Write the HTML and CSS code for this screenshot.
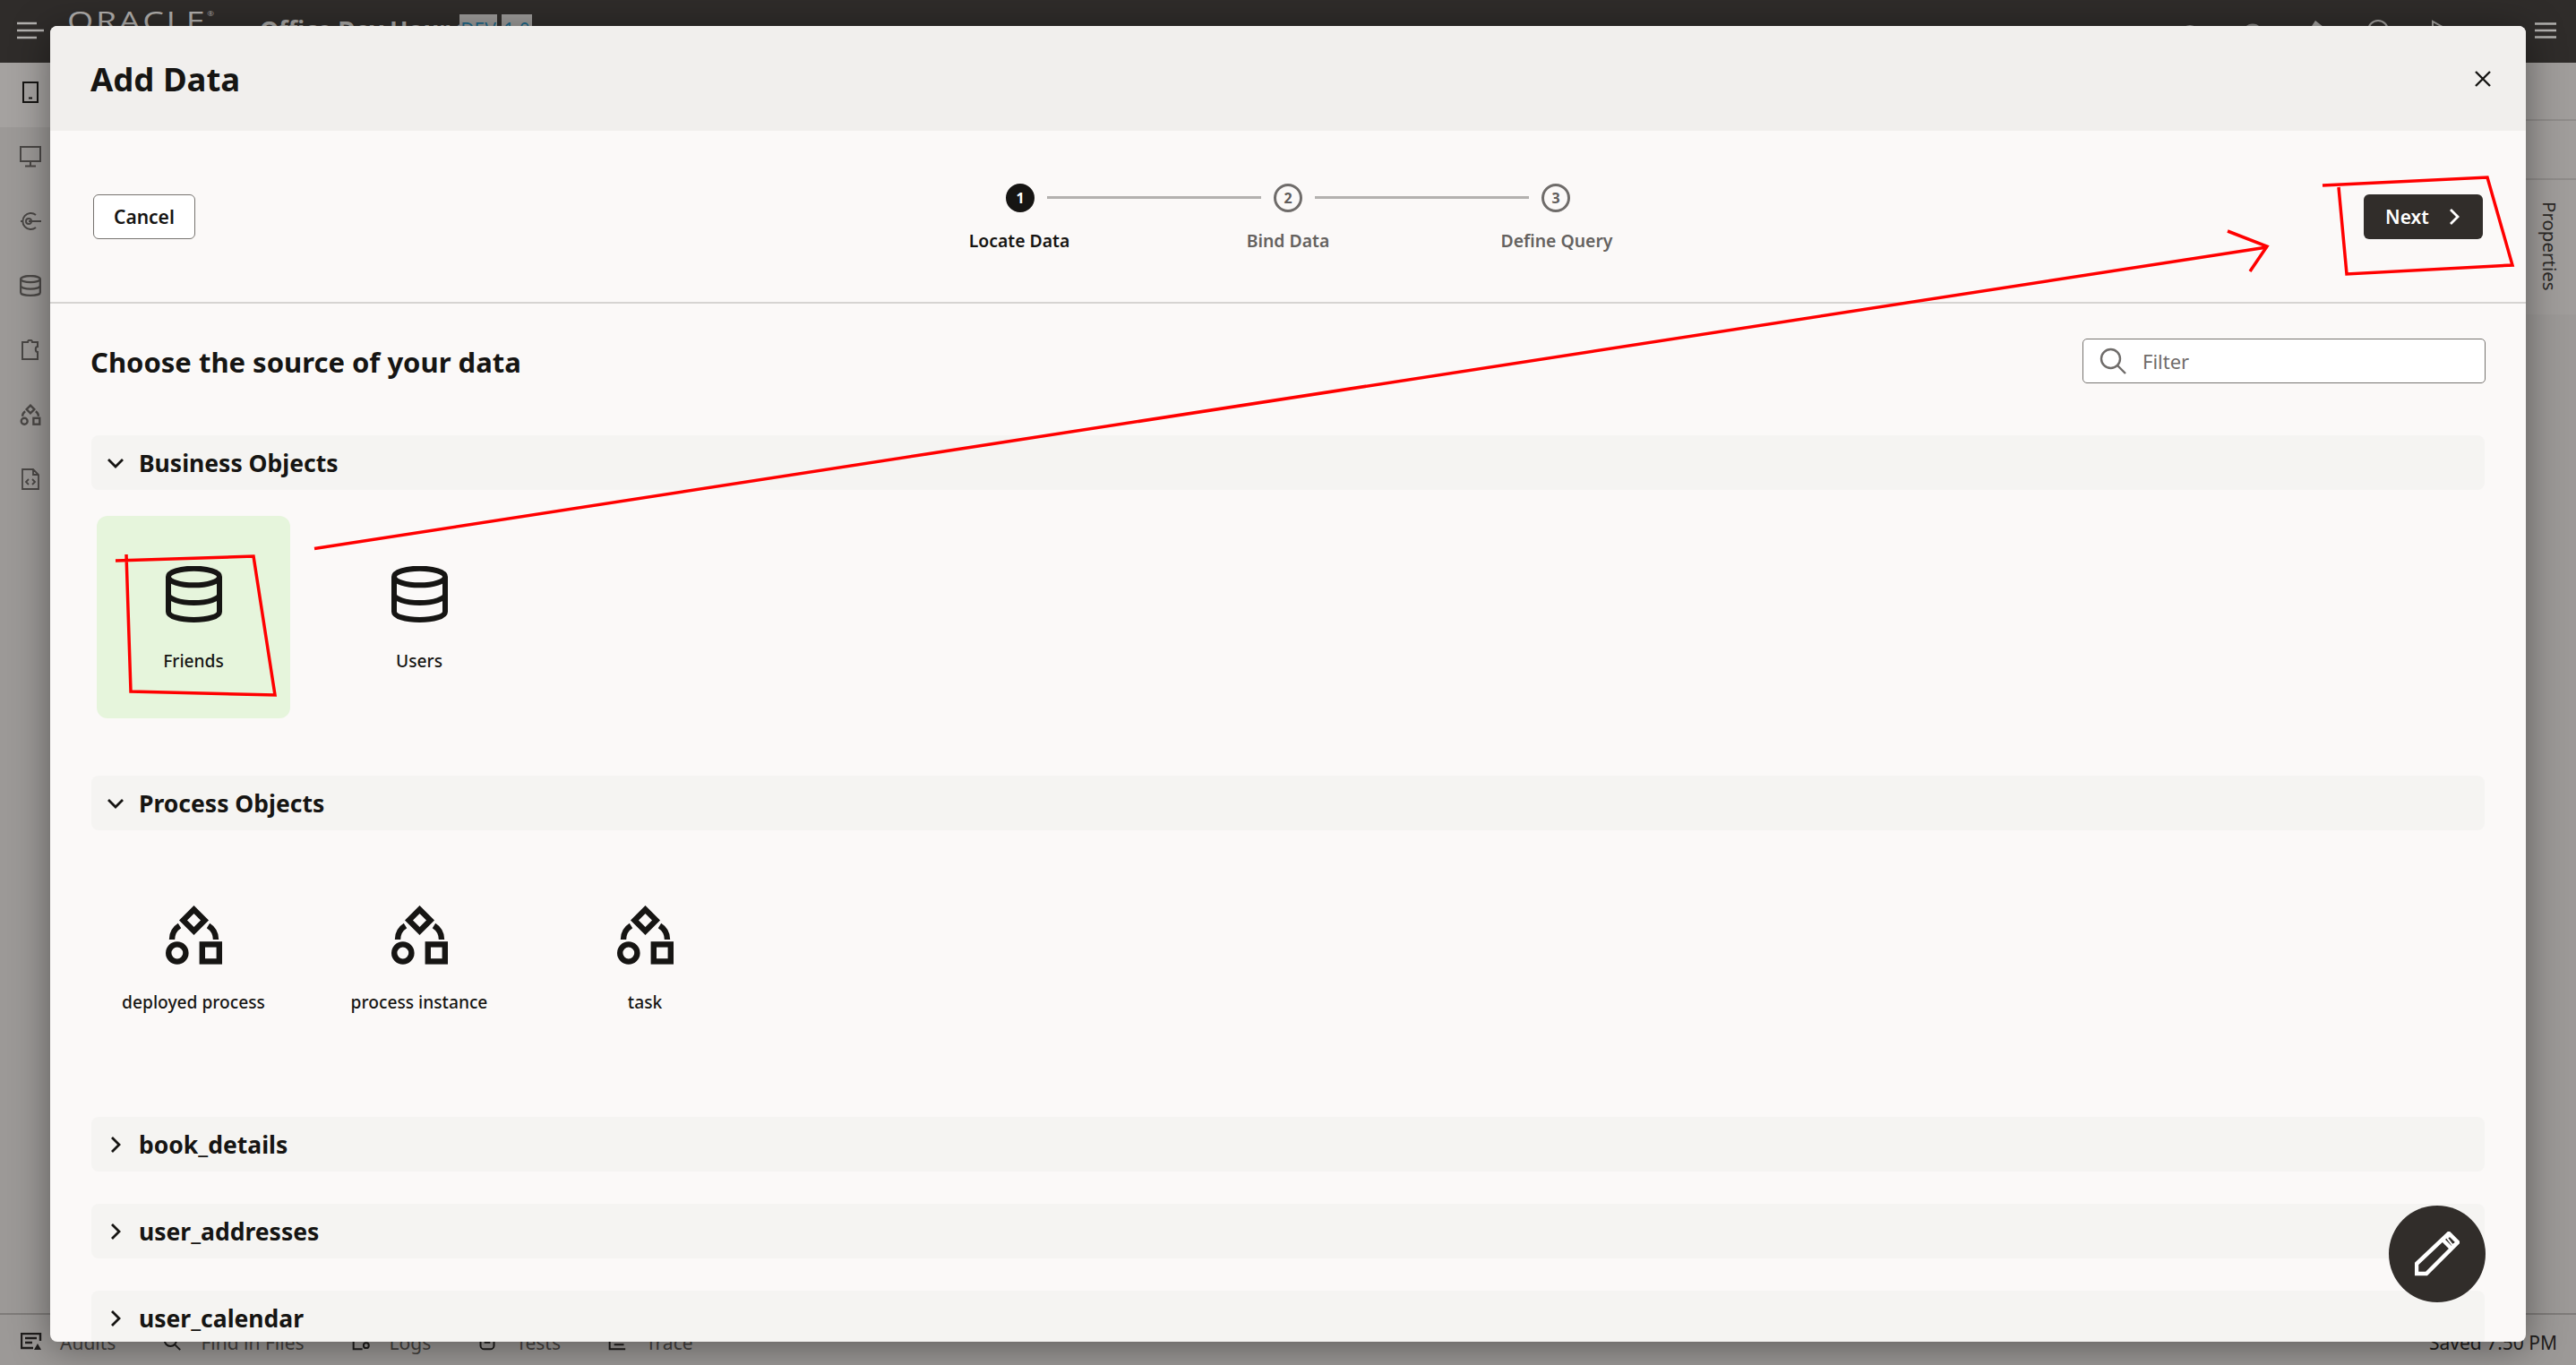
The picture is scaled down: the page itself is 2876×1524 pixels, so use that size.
FILE: index.html
```html
<!DOCTYPE html>
<html lang="en">
<head>
    <meta charset="UTF-8">
    <meta name="viewport" content="width=device-width, initial-scale=1.0">
    <title>Add Data</title>
    <link rel="stylesheet" href="styles.css">
</head>
<body>
    <!-- Shared icons -->
    <svg class="icon-defs" aria-hidden="true">
        <symbol id="i-database" viewBox="0 0 63 63">
            <g fill="none" stroke="currentColor" stroke-width="6">
                <ellipse cx="31.5" cy="12" rx="28.5" ry="9.3"/>
                <path d="M3 12v39c0 5.200 12.800 9 28.500 9s28.500-3.800 28.500-9V12"/>
                <path d="M3 31.600c0 5.200 12.800 9.400 28.500 9.400s28.500-4.200 28.500-9.400"/>
            </g>
        </symbol>
        <symbol id="i-process" viewBox="0 0 63 66">
            <g fill="none" stroke="currentColor" stroke-width="6.400">
                <path d="M31.500 4.500l12 12-12 12-12-12z"/>
                <circle cx="12.800" cy="53" r="9.600"/>
                <rect x="40.800" y="43.400" width="19" height="19"/>
                <path d="M7 38c0-6 3-12 8.500-15.500M56 38c0-6-3-12-8.500-15.500"/>
            </g>
        </symbol>
        <symbol id="i-down" viewBox="0 0 20 20">
            <path d="M2 6l8 8 8-8" fill="none" stroke="currentColor" stroke-width="2.800"/>
        </symbol>
        <symbol id="i-right" viewBox="0 0 20 20">
            <path d="M6 2l8 8-8 8" fill="none" stroke="currentColor" stroke-width="2.800"/>
        </symbol>
    </svg>

    <div class="app">
        <!-- Page behind the dialog -->
        <header class="topbar">
            <svg class="menu-icon" viewBox="0 0 30 20"><path d="M0 2h22M0 10h30M0 18h22" stroke="#b3b1af" stroke-width="2.500"/></svg>
            <span class="oracle-logo">ORACLE<sup>®</sup></span>
            <span class="app-title">Office Dev Hour 1</span>
            <span class="badge">DEV</span>
            <span class="badge badge-version">1.0</span>
            <div class="topbar-tools">
                <svg class="tool tool-low" viewBox="0 0 24 24"><circle cx="12" cy="12" r="10" fill="#9a9896"/></svg>
                <svg class="tool tool-low" viewBox="0 0 24 24"><circle cx="12" cy="12" r="10" fill="none" stroke="#8a8886" stroke-width="3"/></svg>
                <svg class="tool" viewBox="0 0 24 24"><path d="M12 1l9 7-12 14-7-6z" fill="#a3a19f"/></svg>
                <svg class="tool" viewBox="0 0 24 24"><circle cx="12" cy="12" r="11" fill="none" stroke="#a3a19f" stroke-width="2"/></svg>
                <svg class="tool" viewBox="0 0 24 24"><path d="M3 2v20l18-10z" fill="none" stroke="#a3a19f" stroke-width="2"/></svg>
            </div>
            <svg class="hamburger" viewBox="0 0 24 18"><path d="M0 1.500h24M0 9h24M0 16.500h24" stroke="#b3b1af" stroke-width="2.400"/></svg>
        </header>

        <div class="workspace">
            <nav class="sidebar">
                <div class="side-item side-item-active">
                    <svg class="side-icon" viewBox="0 0 24 24"><path d="M4 1h16v22H4z" fill="none" stroke="currentColor" stroke-width="2"/><path d="M10 18.500h4" stroke="currentColor" stroke-width="2"/></svg>
                </div>
                <div class="side-item">
                    <svg class="side-icon" viewBox="0 0 24 24"><path d="M1 1h22v16H1zM12 17v5M6 22.500h12" fill="none" stroke="currentColor" stroke-width="2"/></svg>
                </div>
                <div class="side-item">
                    <svg class="side-icon" viewBox="0 0 24 24"><path d="M18 5a9 9 0 1 0 0 14M3 12H1M10 12h14" fill="none" stroke="currentColor" stroke-width="2"/><circle cx="10" cy="12" r="3" fill="none" stroke="currentColor" stroke-width="2"/></svg>
                </div>
                <div class="side-item">
                    <svg class="side-icon"><use href="#i-database"/></svg>
                </div>
                <div class="side-item">
                    <svg class="side-icon" viewBox="0 0 24 24"><path d="M3 3h6c0-3 5-3 5 0h6v5c-3 0-3 6 0 6v8H3z" fill="none" stroke="currentColor" stroke-width="2"/></svg>
                </div>
                <div class="side-item">
                    <svg class="side-icon"><use href="#i-process"/></svg>
                </div>
                <div class="side-item">
                    <svg class="side-icon" viewBox="0 0 24 24"><path d="M3 1h12l6 6v16H3zM15 1v6h6M10 12l-3 3 3 3M14 12l3 3-3 3" fill="none" stroke="currentColor" stroke-width="1.800"/></svg>
                </div>
            </nav>
            <div class="canvas"></div>
            <aside class="rail">
                <div class="rail-tab rail-tab-a"></div>
                <div class="rail-tab rail-tab-b"></div>
                <div class="rail-tab rail-tab-c"><span>Properties</span></div>
            </aside>
        </div>

        <footer class="statusbar">
            <div class="status-item">
                <svg class="status-icon" viewBox="0 0 24 20"><path d="M22 9V1H1v16h13M5 6h13M5 11h8" fill="none" stroke="#1f1d1c" stroke-width="2.400"/><path d="M19 12l4 7h-8z" fill="#1f1d1c"/></svg>
                <span>Audits</span>
            </div>
            <div class="status-item">
                <svg class="status-icon" viewBox="0 0 24 24"><circle cx="10" cy="10" r="8" fill="none" stroke="#1f1d1c" stroke-width="2.400"/><path d="M16 16l7 7" stroke="#1f1d1c" stroke-width="2.400"/></svg>
                <span>Find in Files</span>
            </div>
            <div class="status-item">
                <svg class="status-icon" viewBox="0 0 24 24"><path d="M2 2v20h12" fill="none" stroke="#1f1d1c" stroke-width="2.400"/><circle cx="19" cy="17" r="3.500" fill="none" stroke="#1f1d1c" stroke-width="2.400"/></svg>
                <span>Logs</span>
            </div>
            <div class="status-item">
                <svg class="status-icon" viewBox="0 0 24 24"><rect x="3" y="3" width="18" height="19" rx="5" fill="none" stroke="#1f1d1c" stroke-width="2.400"/><path d="M8 13h8" stroke="#1f1d1c" stroke-width="2.400"/></svg>
                <span>Tests</span>
            </div>
            <div class="status-item">
                <svg class="status-icon" viewBox="0 0 24 24"><path d="M2 2v20h21M8 10h13M8 16h13" fill="none" stroke="#1f1d1c" stroke-width="2.400"/></svg>
                <span>Trace</span>
            </div>
            <div class="status-saved">Saved 7:50 PM</div>
        </footer>
    </div>

    <!-- Add Data dialog -->
    <section class="modal">
        <div class="modal-header">
            <h1>Add Data</h1>
            <svg class="close-icon" viewBox="0 0 18 18"><path d="M1 1l16 16M17 1L1 17" stroke="#161513" stroke-width="2.400"/></svg>
        </div>

        <div class="train-bar">
            <div class="train-start"><button class="btn">Cancel</button></div>
            <div class="train">
                <div class="train-track">
                    <span class="step-dot step-dot-active">1</span>
                    <span class="step-line"></span>
                    <span class="step-dot">2</span>
                    <span class="step-line"></span>
                    <span class="step-dot">3</span>
                </div>
                <div class="train-labels">
                    <span class="step-label step-label-active">Locate Data</span>
                    <span class="step-label">Bind Data</span>
                    <span class="step-label">Define Query</span>
                </div>
            </div>
            <div class="train-end">
                <button class="btn btn-primary">Next
                    <svg class="btn-icon"><use href="#i-right"/></svg>
                </button>
            </div>
        </div>

        <div class="modal-body">
            <div class="source-head">
                <h2>Choose the source of your data</h2>
                <label class="filter">
                    <svg class="filter-icon" viewBox="0 0 30 30"><circle cx="12.500" cy="12.500" r="10.500" fill="none" stroke="#6f6c6a" stroke-width="2.400"/><path d="M20 20l9 9" stroke="#6f6c6a" stroke-width="2.400"/></svg>
                    <input type="text" placeholder="Filter">
                </label>
            </div>

            <div class="group-bar">
                <svg class="chevron"><use href="#i-down"/></svg>
                <span>Business Objects</span>
            </div>
            <div class="cards">
                <div class="card card-selected">
                    <svg class="card-icon"><use href="#i-database"/></svg>
                    <span>Friends</span>
                </div>
                <div class="card">
                    <svg class="card-icon"><use href="#i-database"/></svg>
                    <span>Users</span>
                </div>
            </div>

            <div class="group-bar">
                <svg class="chevron"><use href="#i-down"/></svg>
                <span>Process Objects</span>
            </div>
            <div class="cards cards-process">
                <div class="card">
                    <svg class="card-icon card-icon-process"><use href="#i-process"/></svg>
                    <span>deployed process</span>
                </div>
                <div class="card">
                    <svg class="card-icon card-icon-process"><use href="#i-process"/></svg>
                    <span>process instance</span>
                </div>
                <div class="card">
                    <svg class="card-icon card-icon-process"><use href="#i-process"/></svg>
                    <span>task</span>
                </div>
            </div>

            <div class="group-bar">
                <svg class="chevron"><use href="#i-right"/></svg>
                <span>book_details</span>
            </div>
            <div class="group-bar group-bar-closed">
                <svg class="chevron"><use href="#i-right"/></svg>
                <span>user_addresses</span>
            </div>
            <div class="group-bar group-bar-closed">
                <svg class="chevron"><use href="#i-right"/></svg>
                <span>user_calendar</span>
            </div>
        </div>

        <button class="fab" aria-label="Edit">
            <svg viewBox="0 0 50 50"><path d="M2 47V36L38 2l10 10-35 35zM31 9l10 10" fill="none" stroke="#fff" stroke-width="4.500"/><path d="M36 7l5-3 6 8-5 3z" fill="none" stroke="#fff" stroke-width="2"/></svg>
        </button>
    </section>

    <!-- Red hand drawn annotations -->
    <svg class="markup" viewBox="0 0 2876 1524">
        <g fill="none" stroke="#f00" stroke-width="3.500">
            <path d="M129 626L283 621 307 776 146 772 141 619"/>
            <path d="M351 612.500L2531 276"/>
            <path d="M2487 258L2531 275 2512 303"/>
            <path d="M2593 207L2777 198 2805 296 2620 306 2611 209"/>
        </g>
    </svg>
</body>
</html>
```

FILE: styles.css
```css
body {
    margin: 0;
    height: 100vh;
    overflow: hidden;
    font-family: "Noto Sans", Arial, sans-serif;
    color: #161513;
    background-color: #9c9997;
}

.icon-defs {
    display: none;
}

.app {
    height: 100vh;
    display: flex;
    flex-direction: column;
}

/* Top bar */
.topbar {
    height: 70px;
    flex-shrink: 0;
    display: flex;
    align-items: flex-start;
    background-color: #2f2c2a;
    color: #a9a7a5;
}

.menu-icon {
    width: 30px;
    height: 20px;
    margin: 24px 0 0 19px;
}

.oracle-logo {
    width: 129px;
    margin: 0 0 0 26px;
    font-family: "Open Sans", sans-serif;
    font-weight: 400;
    font-size: 28.5px;
    line-height: 32px;
    letter-spacing: 2px;
    color: #b0aeac;
    transform: scaleX(1.32);
    transform-origin: left;
    white-space: nowrap;
}

.oracle-logo sup {
    font-size: 7px;
    vertical-align: 16px;
    letter-spacing: 0;
}

.app-title {
    width: 223px;
    margin: 17px 0 0 86px;
    font-size: 27px;
    line-height: 32px;
    font-weight: 700;
    white-space: nowrap;
    color: #a9a7a5;
}

.badge {
    width: 42px;
    height: 40px;
    margin-top: 16px;
    font-size: 21px;
    line-height: 34px;
    text-align: center;
    color: #1c6788;
    background-color: #9c9a98;
}

.badge-version {
    width: 34px;
    margin-left: 5px;
}

.topbar-tools {
    margin-left: auto;
    margin-right: 93px;
    display: flex;
    gap: 46px;
    padding-top: 22px;
}

.tool {
    width: 24px;
    height: 24px;
}

.tool-low {
    margin-top: 4px;
}

.hamburger {
    width: 24px;
    height: 18px;
    margin: 25px 22px 0 0;
}

/* Sides of the page behind the dialog */
.workspace {
    flex: 1;
    display: flex;
    min-height: 0;
}

.sidebar {
    width: 68px;
    display: flex;
    flex-direction: column;
    color: #4a4745;
}

.side-item {
    height: 72px;
    box-sizing: border-box;
    padding-bottom: 6px;
    display: flex;
    justify-content: center;
    align-items: center;
}

.side-item-active {
    background-color: #a5a2a0;
    color: #161513;
}

.side-icon {
    width: 24px;
    height: 24px;
}

.canvas {
    flex: 1;
}

.rail {
    width: 56px;
    display: flex;
    flex-direction: column;
    color: #2b2927;
}

.rail-tab {
    box-sizing: border-box;
    background-color: #a09d9b;
    border-bottom: 2px solid #8f8c8a;
}

.rail-tab-a {
    height: 65px;
}

.rail-tab-b {
    height: 66px;
}

.rail-tab-c {
    height: 150px;
    border-bottom: none;
    display: flex;
    justify-content: center;
    padding-top: 24px;
    padding-right: 2px;
    font-size: 20.5px;
}

.rail-tab-c span {
    writing-mode: vertical-rl;
}

/* Status bar */
.statusbar {
    height: 58px;
    box-sizing: border-box;
    flex-shrink: 0;
    display: flex;
    gap: 51px;
    padding: 16px 21px 0 23px;
    border-top: 2px solid #7e7b79;
    font-size: 21px;
    line-height: 30px;
    color: #45423f;
}

.status-item {
    display: flex;
    gap: 20px;
}

.status-icon {
    width: 24px;
    height: 20px;
    margin-top: 4px;
}

.status-saved {
    margin-left: auto;
    color: #1f1d1c;
}

/* Dialog */
.modal {
    position: absolute;
    left: 56px;
    top: 29px;
    width: 2764px;
    height: 1469px;
    overflow: hidden;
    border-radius: 8px;
    background-color: #fbf9f8;
    box-shadow: 0 6px 44px rgba(0, 0, 0, 0.42);
}

.modal-header {
    height: 117px;
    box-sizing: border-box;
    display: flex;
    justify-content: space-between;
    align-items: center;
    padding: 0 39px 0 45px;
    background-color: #f1efed;
}

h1 {
    margin: 0;
    font-size: 36.5px;
    line-height: 50px;
    font-weight: 700;
}

.close-icon {
    width: 18px;
    height: 18px;
}

.train-bar {
    height: 193px;
    box-sizing: border-box;
    display: grid;
    grid-template-columns: 1fr auto 1fr;
    align-items: center;
    padding: 0 48px;
    border-bottom: 2px solid #d6d4d2;
}

.train-end {
    text-align: right;
}

.btn {
    height: 50px;
    box-sizing: border-box;
    padding: 0 22px;
    font-family: inherit;
    font-size: 21px;
    font-weight: 600;
    color: #161513;
    background-color: #fff;
    border: 1px solid #76736f;
    border-radius: 6px;
}

.btn-primary {
    width: 133px;
    display: inline-flex;
    align-items: center;
    justify-content: space-between;
    padding: 0 22px 0 24px;
    color: #fff;
    background-color: #312d2a;
    border: none;
}

.btn-icon {
    width: 20px;
    height: 20px;
}

.train {
    width: 900px;
    box-sizing: border-box;
    padding-top: 4px;
    display: flex;
    flex-direction: column;
    align-items: center;
    gap: 18px;
}

.train-track {
    display: flex;
    align-items: center;
}

.step-dot {
    width: 32px;
    height: 32px;
    box-sizing: border-box;
    display: flex;
    justify-content: center;
    align-items: center;
    border: 3px solid #6f6c6a;
    border-radius: 50%;
    font-size: 16px;
    font-weight: 700;
    color: #5f5c5a;
}

.step-dot-active {
    color: #fff;
    background-color: #161513;
    border-color: #161513;
}

.step-line {
    width: 239px;
    height: 3px;
    margin: 0 14px;
    background-color: #b3b1af;
}

.train-labels {
    width: 900px;
    display: grid;
    grid-template-columns: repeat(3, 1fr);
    text-align: center;
}

.step-label {
    font-size: 19.4px;
    line-height: 28px;
    font-weight: 600;
    color: #65625f;
}

.step-label-active {
    color: #161513;
}

.modal-body {
    padding: 39px 46px 0;
}

.source-head {
    height: 50px;
    display: flex;
    justify-content: space-between;
    align-items: center;
    margin: 0 -1px 58px 0;
}

h2 {
    margin: 0 0 0 -1px;
    padding-top: 2px;
    font-size: 31px;
    line-height: 44px;
    font-weight: 700;
}

.filter {
    width: 450px;
    height: 50px;
    box-sizing: border-box;
    display: flex;
    align-items: center;
    gap: 18px;
    padding-left: 18px;
    background-color: #fff;
    border: 1px solid #76736f;
    border-radius: 5px;
}

.filter-icon {
    width: 30px;
    height: 30px;
    flex-shrink: 0;
}

.filter input {
    flex: 1;
    min-width: 0;
    border: none;
    outline: none;
    padding: 0;
    font-family: inherit;
    font-size: 22px;
    background: none;
}

.filter input::placeholder {
    color: #6f6c6a;
}

.group-bar {
    height: 61px;
    display: flex;
    align-items: center;
    gap: 16px;
    padding-left: 17px;
    font-size: 26.5px;
    font-weight: 700;
    background-color: #f5f4f2;
    border-radius: 8px;
}

.group-bar-closed {
    margin-top: 36px;
}

.chevron {
    width: 20px;
    height: 20px;
}

.cards {
    display: flex;
    gap: 36px;
    padding: 29px 0 64px 6px;
}

.cards-process {
    padding-bottom: 65px;
}

.card {
    width: 216px;
    height: 226px;
    box-sizing: border-box;
    display: flex;
    flex-direction: column;
    align-items: center;
    padding-top: 56px;
    border-radius: 12px;
    font-size: 19.2px;
    line-height: 28px;
    font-weight: 500;
    white-space: nowrap;
}

.card-selected {
    background-color: #e6f5dc;
}

.card-icon {
    width: 63px;
    height: 63px;
    margin-bottom: 29px;
    flex-shrink: 0;
}

.card-icon-process {
    height: 66px;
    margin-top: -1px;
    margin-bottom: 28px;
}

.fab {
    position: absolute;
    left: 2611px;
    top: 1317px;
    width: 108px;
    height: 108px;
    padding: 29px;
    border: none;
    border-radius: 50%;
    background-color: #312d2a;
}

.fab svg {
    display: block;
    width: 50px;
    height: 50px;
}

.markup {
    position: absolute;
    left: 0;
    top: 0;
    width: 2876px;
    height: 1524px;
    pointer-events: none;
}
```
